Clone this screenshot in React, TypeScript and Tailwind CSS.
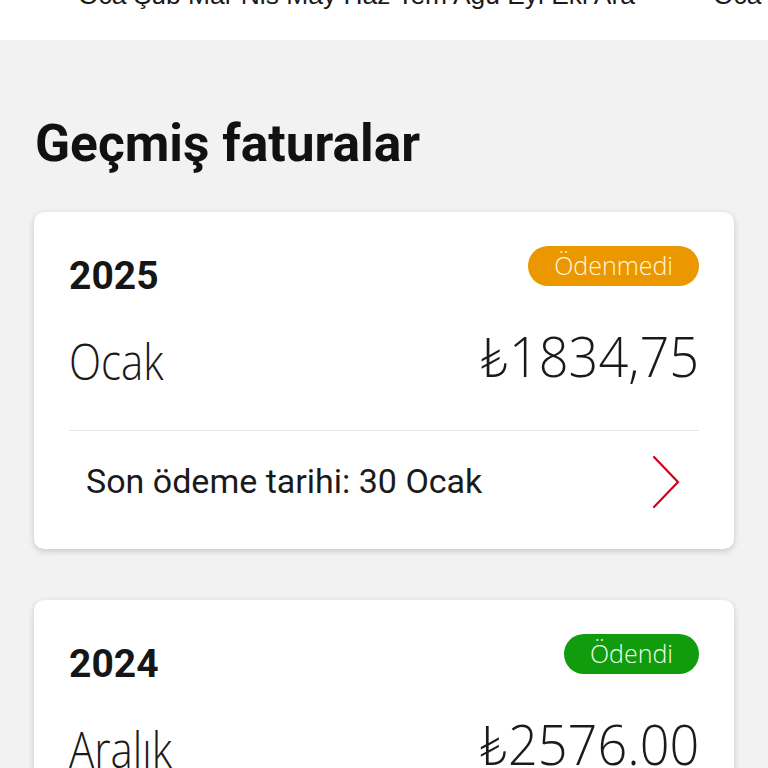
import React from "react";

const light = { fontFamily: "'Open Sans', Lato, sans-serif" };

function Chevron() {
  return (
    <svg width="30" height="54" viewBox="0 0 30 54" fill="none">
      <path d="M3 2 L27 27 L3 52" stroke="#d0021b" strokeWidth="2.2" strokeLinecap="round" strokeLinejoin="miter" />
    </svg>
  );
}

function Card({ year, badge, badgeClass, month, amount, footer }: { year: string; badge: string; badgeClass: string; month: string; amount: string; footer?: boolean }) {
  return (
    <div className="bg-white rounded-[10px] shadow-[0_2px_6px_rgba(0,0,0,0.18)] px-[35px] pt-[34px] pb-[40px]">
      <div className="flex justify-between items-start">
        <div className="text-[39px] leading-none font-bold text-[#161616] mt-[11px]" style={{ fontFamily: "Roboto, sans-serif" }}>{year}</div>
        <div className={`h-[40px] rounded-full px-[26px] flex items-center text-[25px] font-light ${badgeClass}`} style={light}>{badge}</div>
      </div>
      <div className="flex justify-between items-end mt-[40px]">
        <div className="text-[50px] leading-none font-light text-[#1a1a1a] inline-block scale-x-[0.84] origin-left" style={light}>{month}</div>
        <div className="text-[55px] leading-none font-light text-[#1a1a1a] -mt-[8px] mb-[3px] inline-block scale-x-[0.95] origin-right" style={light}>{amount}</div>
      </div>
      {footer && (
        <>
          <div className="h-px bg-[#e6e6e6] mt-[44px]" />
          <div className="flex items-center justify-between pl-[17px] pr-[18px] pt-[24px]">
            <div className="text-[34px] text-[#1a1a1a]" style={{ fontFamily: "Roboto, sans-serif" }}>Son ödeme tarihi: 30 Ocak</div>
            <Chevron />
          </div>
        </>
      )}
    </div>
  );
}

export default function App() {
  return (
    <div className="w-[768px] h-[768px] overflow-hidden bg-[#f2f2f2]">
      <div className="h-[40px] bg-white overflow-hidden relative">
        <div className="absolute left-[78px] top-[-18px] text-[26.4px] leading-[26px] text-[#1a1a1a] whitespace-nowrap" style={{ fontFamily: "'Liberation Sans', Arial, sans-serif" }}>
          Oca Şub Mar Nis May Haz Tem Ağu Eyl Eki Ara
        </div>
        <div className="absolute left-[713px] top-[-18px] text-[26.4px] leading-[26px] text-[#1a1a1a] whitespace-nowrap" style={{ fontFamily: "'Liberation Sans', Arial, sans-serif" }}>
          Oca
        </div>
      </div>
      <div className="px-[34px]">
        <h1 className="text-[51.5px] font-bold text-[#111] leading-none mt-[78px] ml-[1px]" style={{ fontFamily: "Roboto, sans-serif" }}>Geçmiş faturalar</h1>
        <div className="mt-[42px] flex flex-col gap-[51px]">
          <Card year="2025" badge="Ödenmedi" badgeClass="bg-[#eb9700] text-[#fff6dc]" month="Ocak" amount="₺1834,75" footer />
          <Card year="2024" badge="Ödendi" badgeClass="bg-[#109c0c] text-[#eaffea]" month="Aralık" amount="₺2576.00" />
        </div>
      </div>
    </div>
  );
}
